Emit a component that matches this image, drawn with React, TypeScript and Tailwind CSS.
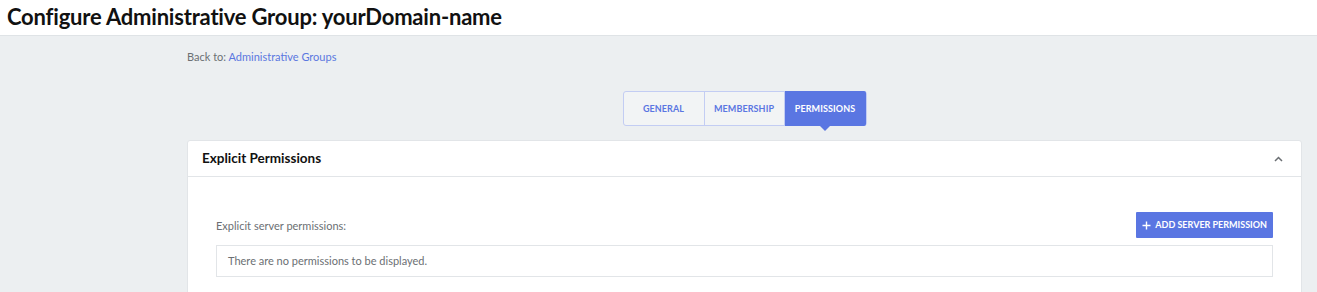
import React from 'react';

const tabs = ['General', 'Membership', 'Permissions'];

export default function App() {
  const active = 'Permissions';

  return (
    <div className="min-h-[292px] bg-[#eceff1] font-['Lato',sans-serif]">
      {/* Page header */}
      <div className="h-[36px] bg-white border-b border-[#dfe3e6] px-[7px] flex items-center">
        <h1 className="text-[22px] font-bold text-[#111] leading-none tracking-[-0.2px] -mt-[1px]">
          Configure Administrative Group: yourDomain-name
        </h1>
      </div>

      <div className="ml-[187px] mr-[15px]">
        <div className="pt-[14px] text-[11px] text-[#6b6f73] leading-[14px]">
          Back to: <a className="text-[#5b77e0]">Administrative Groups</a>
        </div>

        {/* Tabs */}
        <div className="flex justify-center mt-[27px]">
          <div className="flex h-[35px] rounded-[3px] border border-[#c3cdf3] bg-white/30">
            {tabs.map((t, i) => {
              const isActive = t === active;
              return (
                <div
                  key={t}
                  className={`relative flex items-center justify-center text-[9px] font-bold uppercase tracking-[0.1px] ${
                    i === 2 ? 'w-[82px]' : 'w-[80px]'
                  } ${i > 0 ? 'border-l border-[#c3cdf3]' : ''} ${
                    isActive ? 'bg-[#5a76e2] text-white rounded-r-[2px] -my-px' : 'text-[#5a76e2]'
                  }`}
                >
                  {t}
                  {isActive && (
                    <span className="absolute left-1/2 -translate-x-1/2 top-full w-0 h-0 border-l-[5px] border-r-[5px] border-t-[5px] border-l-transparent border-r-transparent border-t-[#5a76e2]" />
                  )}
                </div>
              );
            })}
          </div>
        </div>

        {/* Card */}
        <div className="mt-[14px] bg-white border border-[#e2e5e8] rounded-t-[3px]">
          <div className="h-[36px] flex items-center justify-between px-[14px] border-b border-[#e2e5e8]">
            <span className="text-[13.5px] font-bold text-[#111]">Explicit Permissions</span>
            <svg width="9" height="6" viewBox="0 0 9 6" className="mr-[4px]">
              <path d="M1 5 L4.5 1.5 L8 5" fill="none" stroke="#6b6f73" strokeWidth="1.5" />
            </svg>
          </div>
          <div className="px-[28px] pt-[35px] pb-[15px]">
            <div className="flex items-center justify-between">
              <span className="text-[11px] text-[#6b6f73] pt-[2px]">Explicit server permissions:</span>
              <button className="h-[26px] px-[6px] bg-[#5a76e2] text-white text-[9px] font-bold uppercase flex items-center gap-[4px] rounded-[1px]">
                <svg width="9" height="9" viewBox="0 0 9 9">
                  <path d="M4.5 0.5 V8.5 M0.5 4.5 H8.5" stroke="white" strokeWidth="1.4" />
                </svg>
                Add Server Permission
              </button>
            </div>
            <div className="mt-[7px] h-[32px] border border-[#e2e5e8] flex items-center px-[11px] text-[11px] text-[#6b6f73]">
              There are no permissions to be displayed.
            </div>
          </div>
        </div>
      </div>
    </div>
  );
}
